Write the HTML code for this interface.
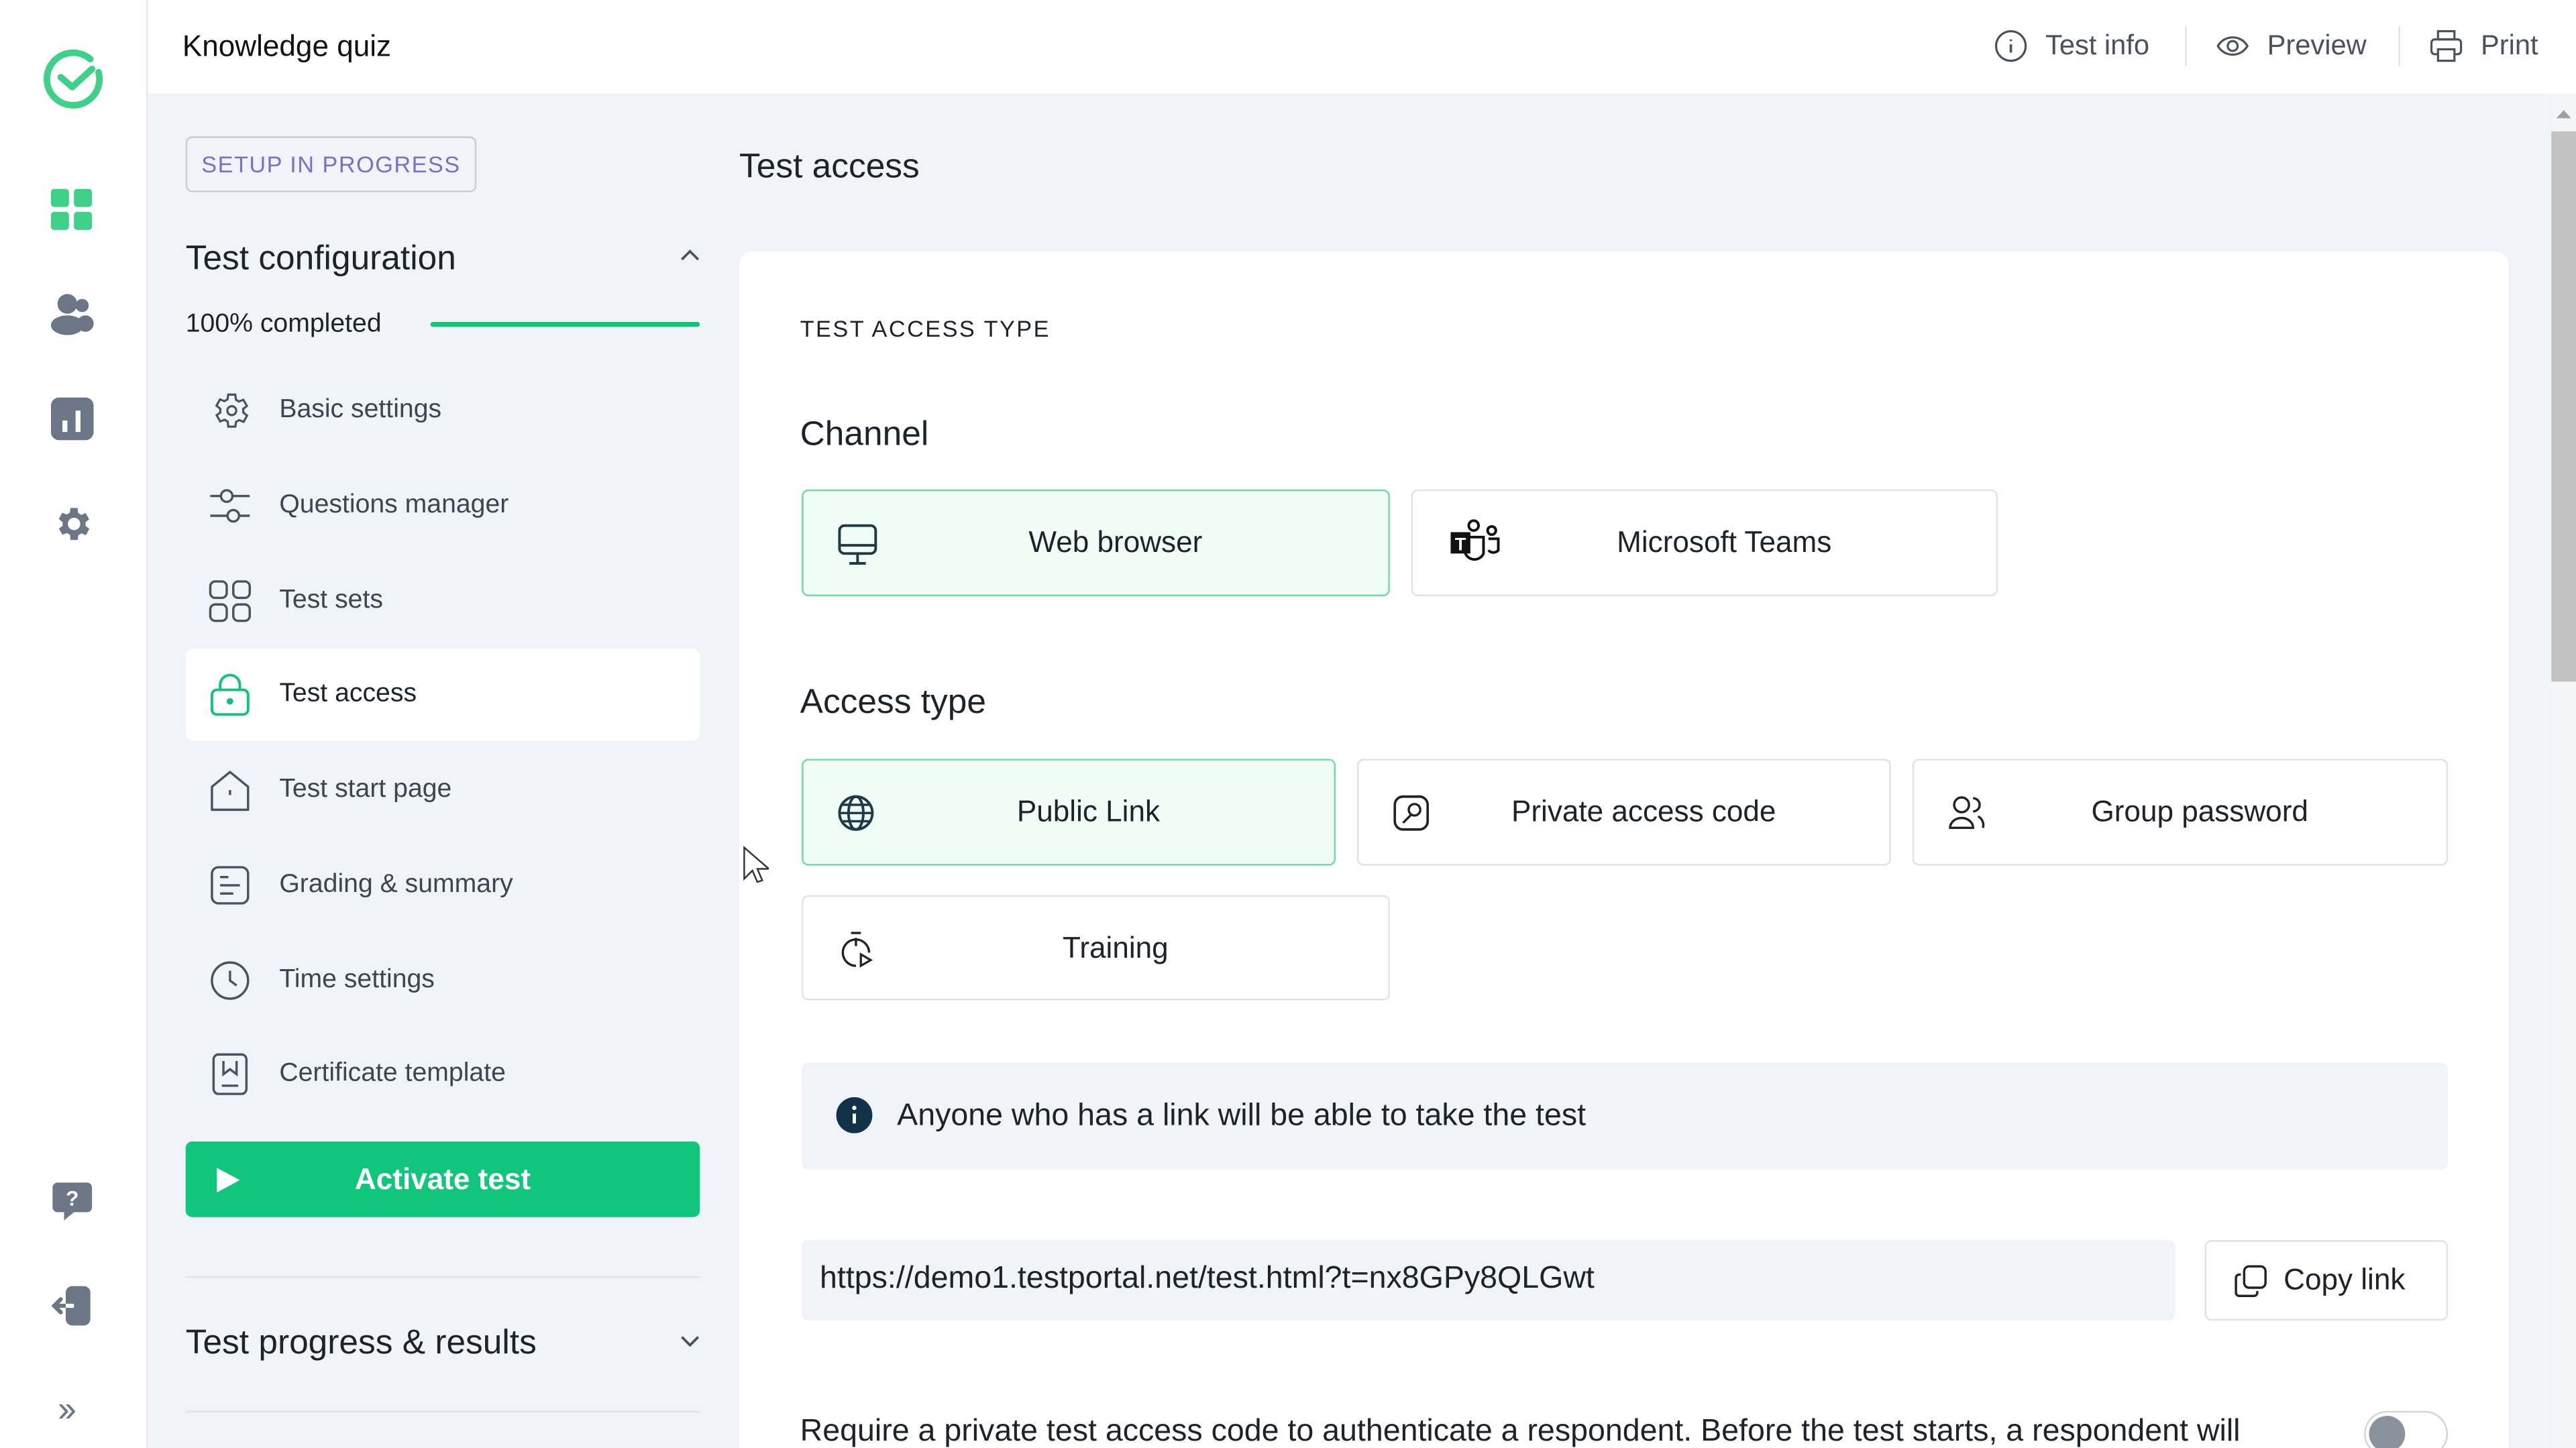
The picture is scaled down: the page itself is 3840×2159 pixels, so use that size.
<!DOCTYPE html>
<html><head><meta charset="utf-8">
<style>
*{box-sizing:border-box;margin:0;padding:0}
html,body{width:3840px;height:2159px;overflow:hidden;background:#f0f3f8}
#w{width:1568px;height:882px;transform:scale(2.449);transform-origin:0 0;position:relative;font-family:"Liberation Sans",sans-serif;color:#1d2329;background:#f0f3f8;overflow:hidden}
.a{position:absolute}
.rail{left:0;top:0;width:90px;height:882px;background:#fff;border-right:1px solid #e6e9ef}
.top{left:90px;top:0;width:1478px;height:57px;background:#fff}
.mi{left:113px;width:313px;height:56px;display:flex;align-items:center;font-size:16px;color:#3c4550}
.mi svg{margin-left:14px;margin-right:17px}
.btn{border:1px solid #dfe2e8;border-radius:4px;background:#fff;display:flex;align-items:center;font-size:18px;color:#1d2329}
.sel{background:#f0fdf6;border:1.5px solid #72d9a7}
.btn .t{position:absolute;left:0;right:0;padding-left:24px;text-align:center}
.btn svg{position:absolute;left:20px;top:20px}
</style></head><body><div id="w">
<div class="a rail"></div>
<svg class="a" style="left:25px;top:28px" width="40" height="40" viewBox="0 0 40 40"><path d="M30 8A16 16 0 1 0 35 16" fill="none" stroke="#3fd08a" stroke-width="4" stroke-linecap="round"/><path d="M12 19l7 6 12-11" fill="none" stroke="#3fd08a" stroke-width="4" stroke-linecap="round" stroke-linejoin="round"/></svg>
<svg class="a" style="left:31px;top:115px" width="26" height="26"><rect x="0" y="0" width="11" height="11" rx="2" fill="#3fd08a"/><rect x="14" y="0" width="11" height="11" rx="2" fill="#3fd08a"/><rect x="0" y="14" width="11" height="11" rx="2" fill="#3fd08a"/><rect x="14" y="14" width="11" height="11" rx="2" fill="#3fd08a"/></svg>
<svg class="a" style="left:31px;top:178px" width="26" height="26"><circle cx="10" cy="7" r="6" fill="#6b7686"/><ellipse cx="10" cy="20" rx="10" ry="6" fill="#6b7686"/><circle cx="19" cy="8" r="4" fill="#6b7686"/><ellipse cx="21" cy="19" rx="5" ry="5" fill="#6b7686"/></svg>
<svg class="a" style="left:31px;top:242px" width="26" height="26"><rect width="26" height="26" rx="5" fill="#6b7686"/><rect x="7" y="14" width="3" height="7" fill="#fff"/><rect x="15" y="8" width="3" height="13" fill="#fff"/></svg>
<svg class="a" style="left:31px;top:306px" width="26" height="26" viewBox="0 0 24 24"><path fill="#6b7686" d="M19.4 13a7.5 7.5 0 0 0 0-2l2.1-1.6-2-3.5-2.5 1a7 7 0 0 0-1.7-1L15 3h-4l-.4 2.7a7 7 0 0 0-1.7 1l-2.5-1-2 3.5L6.6 11a7.5 7.5 0 0 0 0 2l-2.1 1.6 2 3.5 2.5-1a7 7 0 0 0 1.7 1L11 21h4l.4-2.7a7 7 0 0 0 1.7-1l2.5 1 2-3.5zM13 15.5a3.5 3.5 0 1 1 0-7 3.5 3.5 0 0 1 0 7z"/></svg>
<svg class="a" style="left:31px;top:718px" width="26" height="26"><path d="M4 2h18a3 3 0 0 1 3 3v12a3 3 0 0 1-3 3h-8l-6 5v-5H4a3 3 0 0 1-3-3V5a3 3 0 0 1 3-3z" fill="#6b7686"/><text x="13" y="16" font-size="13" font-weight="700" fill="#fff" text-anchor="middle" font-family="Liberation Sans">?</text></svg>
<svg class="a" style="left:31px;top:782px" width="26" height="26"><rect x="9" y="1" width="15" height="24" rx="4" fill="#6b7686"/><path d="M14 13H2m4-4l-4 4 4 4" stroke="#6b7686" stroke-width="2.5" fill="none" stroke-linecap="round"/><path d="M14 13H9" stroke="#fff" stroke-width="2.5"/></svg>
<div class="a" style="left:35px;top:845px;font-size:22px;color:#6b7686;letter-spacing:-3px">››</div>

<div class="a top"></div>
<div class="a" style="left:111px;top:18px;font-size:18px;color:#111">Knowledge quiz</div>
<svg class="a" style="left:1214px;top:18px" width="20" height="20"><circle cx="10" cy="10" r="9" fill="none" stroke="#4a5260" stroke-width="1.3"/><path d="M10 9v5M10 6v1" stroke="#4a5260" stroke-width="1.5"/></svg>
<div class="a" style="left:1245px;top:18px;font-size:17px;color:#4a5260">Test info</div>
<div class="a" style="left:1330px;top:16px;width:1px;height:24px;background:#dfe2e8"></div>
<svg class="a" style="left:1349px;top:18px" width="20" height="20"><path d="M1 10c4-7 14-7 18 0-4 7-14 7-18 0z" fill="none" stroke="#4a5260" stroke-width="1.3"/><circle cx="10" cy="10" r="3" fill="none" stroke="#4a5260" stroke-width="1.3"/></svg>
<div class="a" style="left:1380px;top:18px;font-size:17px;color:#4a5260">Preview</div>
<div class="a" style="left:1460px;top:16px;width:1px;height:24px;background:#dfe2e8"></div>
<svg class="a" style="left:1479px;top:18px" width="20" height="20"><rect x="5" y="1" width="10" height="5" fill="none" stroke="#4a5260" stroke-width="1.3"/><rect x="1" y="6" width="18" height="9" rx="2" fill="none" stroke="#4a5260" stroke-width="1.3"/><rect x="5" y="12" width="10" height="7" fill="#fff" stroke="#4a5260" stroke-width="1.3"/></svg>
<div class="a" style="left:1510px;top:18px;font-size:17px;color:#4a5260">Print</div>

<div class="a" style="left:113px;top:83px;width:177px;height:34px;border:1px solid #c9cbd8;border-radius:4px;font-size:14px;color:#7c6fc4;letter-spacing:.6px;display:flex;align-items:center;justify-content:center">SETUP IN PROGRESS</div>
<div class="a" style="left:113px;top:146px;font-size:21px;color:#1d2329">Test configuration</div>
<svg class="a" style="left:413px;top:150px" width="14" height="10"><path d="M2 8l5-5 5 5" fill="none" stroke="#4a5260" stroke-width="1.5"/></svg>
<div class="a" style="left:113px;top:189px;font-size:16px;color:#1d2329">100% completed</div>
<div class="a" style="left:262px;top:196px;width:164px;height:3px;border-radius:2px;background:#10c47a"></div>

<div class="a mi" style="top:222px"><svg width="26" height="26" viewBox="0 0 24 24"><path fill="none" stroke="#4a5260" stroke-width="1.2" d="M19.4 13a7.5 7.5 0 0 0 0-2l2.1-1.6-2-3.5-2.5 1a7 7 0 0 0-1.7-1L15 3h-4l-.4 2.7a7 7 0 0 0-1.7 1l-2.5-1-2 3.5L6.6 11a7.5 7.5 0 0 0 0 2l-2.1 1.6 2 3.5 2.5-1a7 7 0 0 0 1.7 1L11 21h4l.4-2.7a7 7 0 0 0 1.7-1l2.5 1 2-3.5z"/><circle cx="13" cy="12" r="2.5" fill="none" stroke="#4a5260" stroke-width="1.2"/></svg>Basic settings</div>
<div class="a mi" style="top:280px"><svg width="26" height="26"><path d="M1 7h6M15 7h10M1 19h10M19 19h6" stroke="#4a5260" stroke-width="1.4"/><circle cx="11" cy="7" r="3.5" fill="none" stroke="#4a5260" stroke-width="1.4"/><circle cx="15" cy="19" r="3.5" fill="none" stroke="#4a5260" stroke-width="1.4"/></svg>Questions manager</div>
<div class="a mi" style="top:338px"><svg width="26" height="26"><rect x="1" y="1" width="10" height="10" rx="3" fill="none" stroke="#4a5260" stroke-width="1.4"/><rect x="15" y="1" width="10" height="10" rx="3" fill="none" stroke="#4a5260" stroke-width="1.4"/><rect x="1" y="15" width="10" height="10" rx="3" fill="none" stroke="#4a5260" stroke-width="1.4"/><rect x="15" y="15" width="10" height="10" rx="3" fill="none" stroke="#4a5260" stroke-width="1.4"/></svg>Test sets</div>
<div class="a mi" style="top:395px;background:#fff;border-radius:4px;color:#1d2329"><svg width="26" height="26"><rect x="2" y="10" width="22" height="15" rx="3" fill="none" stroke="#10c47a" stroke-width="1.6"/><path d="M7 10V7a6 6 0 0 1 12 0v3" fill="none" stroke="#10c47a" stroke-width="1.6"/><circle cx="13" cy="17" r="2" fill="#10c47a"/></svg>Test access</div>
<div class="a mi" style="top:453px"><svg width="26" height="26"><path d="M2 11L13 2l11 9v14H2z" fill="none" stroke="#4a5260" stroke-width="1.4" stroke-linejoin="round"/><path d="M13 13v3" stroke="#4a5260" stroke-width="1.4"/></svg>Test start page</div>
<div class="a mi" style="top:511px"><svg width="26" height="26"><rect x="2" y="2" width="22" height="22" rx="4" fill="none" stroke="#4a5260" stroke-width="1.4"/><path d="M7 13h12M7 18h8M7 8h5" stroke="#4a5260" stroke-width="1.4"/></svg>Grading &amp; summary</div>
<div class="a mi" style="top:569px"><svg width="26" height="26"><circle cx="13" cy="13" r="11" fill="none" stroke="#4a5260" stroke-width="1.4"/><path d="M13 7v6l4 3" fill="none" stroke="#4a5260" stroke-width="1.4"/></svg>Time settings</div>
<div class="a mi" style="top:626px"><svg width="26" height="26"><rect x="3" y="1" width="20" height="24" rx="3" fill="none" stroke="#4a5260" stroke-width="1.4"/><path d="M9 5v8l4-3 4 3V5M8 20h10" fill="none" stroke="#4a5260" stroke-width="1.4"/></svg>Certificate template</div>

<div class="a" style="left:113px;top:695px;width:313px;height:46px;background:#0fc67a;border-radius:4px;color:#fff;font-size:18px;font-weight:700;display:flex;align-items:center;justify-content:center">Activate test</div>
<svg class="a" style="left:131px;top:710px" width="16" height="17"><path d="M1 1l14 7.5L1 16z" fill="#fff"/></svg>
<div class="a" style="left:113px;top:777px;width:313px;height:1px;background:#dfe2e8"></div>
<div class="a" style="left:113px;top:806px;font-size:21px">Test progress &amp; results</div>
<svg class="a" style="left:413px;top:812px" width="14" height="10"><path d="M2 2l5 5 5-5" fill="none" stroke="#4a5260" stroke-width="1.5"/></svg>
<div class="a" style="left:113px;top:859px;width:313px;height:1px;background:#dfe2e8"></div>

<div class="a" style="left:450px;top:90px;font-size:21px">Test access</div>
<div class="a" style="left:450px;top:153px;width:1077px;height:760px;background:#fff;border-radius:8px"></div>
<div class="a" style="left:487px;top:192px;font-size:14px;letter-spacing:1px;color:#1d2329">TEST ACCESS TYPE</div>
<div class="a" style="left:487px;top:253px;font-size:21px">Channel</div>
<div class="a btn sel" style="left:488px;top:298px;width:358px;height:65px"><svg width="26" height="26"><rect x="2" y="1" width="22" height="17" rx="3" fill="none" stroke="#1f3a44" stroke-width="1.6"/><path d="M2 13h22M13 18v6M8 24h10" stroke="#1f3a44" stroke-width="1.6"/></svg><span class="t">Web browser</span></div>
<div class="a btn" style="left:859px;top:298px;width:357px;height:65px"><svg width="34" height="30" style="left:22px;top:17px"><circle cx="15" cy="4" r="3" fill="none" stroke="#111" stroke-width="1.6"/><circle cx="26" cy="7" r="2.5" fill="none" stroke="#111" stroke-width="1.6"/><path d="M10 11h11v10a6 6 0 0 1-11 0zM24 12h6v7a4 4 0 0 1-6 0" fill="none" stroke="#111" stroke-width="1.6"/><rect x="1" y="8" width="12" height="13" fill="#111"/><text x="7" y="19" font-size="11" font-weight="700" fill="#fff" text-anchor="middle" font-family="Liberation Sans">T</text></svg><span class="t">Microsoft Teams</span></div>
<div class="a" style="left:487px;top:416px;font-size:21px">Access type</div>
<div class="a btn sel" style="left:488px;top:462px;width:325px;height:65px"><svg width="24" height="24"><circle cx="12" cy="12" r="10" fill="none" stroke="#1f3a44" stroke-width="1.6"/><ellipse cx="12" cy="12" rx="4.5" ry="10" fill="none" stroke="#1f3a44" stroke-width="1.6"/><path d="M2 12h20M4 7h16M4 17h16" stroke="#1f3a44" stroke-width="1.4"/></svg><span class="t">Public Link</span></div>
<div class="a btn" style="left:826px;top:462px;width:325px;height:65px"><svg width="24" height="24"><rect x="2" y="2" width="20" height="20" rx="5" fill="none" stroke="#222" stroke-width="1.5"/><circle cx="14" cy="10" r="3.5" fill="none" stroke="#222" stroke-width="1.4"/><path d="M12 13l-5 5" stroke="#222" stroke-width="1.4"/></svg><span class="t">Private access code</span></div>
<div class="a btn" style="left:1164px;top:462px;width:326px;height:65px"><svg width="24" height="24"><circle cx="9" cy="7" r="4.5" fill="none" stroke="#222" stroke-width="1.4"/><path d="M2 21a7 6 0 0 1 14 0z" fill="none" stroke="#222" stroke-width="1.4"/><path d="M16 3a4 4 0 0 1 0 8M19 14a6 6 0 0 1 3 7" fill="none" stroke="#222" stroke-width="1.4"/></svg><span class="t">Group password</span></div>
<div class="a btn" style="left:488px;top:545px;width:358px;height:64px"><svg width="24" height="24"><path d="M9 2h6M12 5v5" stroke="#222" stroke-width="1.4"/><path d="M12 22a8 8 0 1 1 8-8" fill="none" stroke="#222" stroke-width="1.4"/><path d="M15 15l6 3.5-6 3.5z" fill="none" stroke="#222" stroke-width="1.3"/></svg><span class="t">Training</span></div>

<div class="a" style="left:488px;top:647px;width:1002px;height:65px;background:#f0f3f8;border-radius:4px"></div>
<svg class="a" style="left:509px;top:668px" width="22" height="22"><circle cx="11" cy="11" r="11" fill="#12324a"/><path d="M11 10v6" stroke="#fff" stroke-width="2"/><circle cx="11" cy="6.5" r="1.3" fill="#fff"/></svg>
<div class="a" style="left:546px;top:669px;font-size:19px;color:#1d2329">Anyone who has a link will be able to take the test</div>

<div class="a" style="left:488px;top:755px;width:836px;height:49px;background:#f0f3f8;border-radius:4px"></div>
<div class="a" style="left:499px;top:768px;font-size:19px;color:#1d2329">https://demo1.testportal.net/test.html?t=nx8GPy8QLGwt</div>
<div class="a btn" style="left:1342px;top:755px;width:148px;height:49px"><svg width="22" height="22" style="left:16px;top:13px"><rect x="7" y="2" width="13" height="13" rx="3" fill="none" stroke="#222" stroke-width="1.4"/><path d="M5 7H4a2 2 0 0 0-2 2v9a2 2 0 0 0 2 2h9a2 2 0 0 0 2-2v-1" fill="none" stroke="#222" stroke-width="1.4"/></svg><span style="position:absolute;left:47px;top:13px">Copy link</span></div>

<div class="a" style="left:487px;top:861px;font-size:19px;color:#1d2329;white-space:nowrap">Require a private test access code to authenticate a respondent. Before the test starts, a respondent will</div>
<div class="a" style="left:1439px;top:859px;width:51px;height:28px;border-radius:14px;background:#fff;border:1.5px solid #d0d4db"></div>
<div class="a" style="left:1442px;top:862px;width:22px;height:22px;border-radius:11px;background:#8a929e"></div>

<div class="a" style="left:1553px;top:57px;width:15px;height:825px;background:#f4f5f7"></div>
<div class="a" style="left:1553px;top:80px;width:15px;height:335px;background:#c2c2c2"></div>
<svg class="a" style="left:1556px;top:66px" width="9" height="6"><path d="M0 6l4.5-5L9 6z" fill="#a0a0a0"/></svg>
<svg class="a" style="left:452px;top:515px" width="16" height="24"><path d="M1 1v19l5-5 3 7 3-1-3-7h7z" fill="#fff" stroke="#333" stroke-width="1"/></svg>
</div></body></html>
